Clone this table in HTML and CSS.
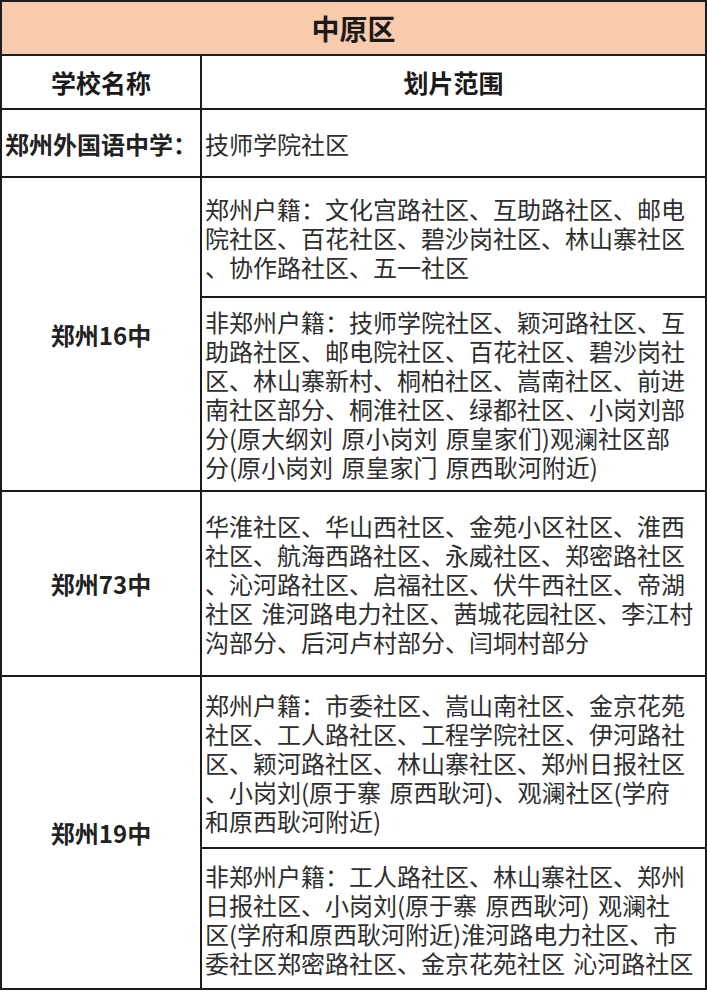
FILE: index.html
```html
<!DOCTYPE html>
<html lang="zh-CN">
<head>
<meta charset="utf-8">
<title>中原区</title>
<link rel="stylesheet" href="styles.css">
</head>
<body>
<div class="grid">
  <div class="cell title">中原区</div>
  <div class="cell head">学校名称</div>
  <div class="cell head">划片范围</div>

  <div class="cell school">郑州外国语中学：</div>
  <div class="cell area">技师学院社区</div>

  <div class="cell school r16">郑州16中</div>
  <div class="cell area">郑州户籍：文化宫路社区、互助路社区、邮电<br>院社区、百花社区、碧沙岗社区、林山寨社区<br>、协作路社区、五一社区</div>
  <div class="cell area">非郑州户籍：技师学院社区、颖河路社区、互<br>助路社区、邮电院社区、百花社区、碧沙岗社<br>区、林山寨新村、桐柏社区、嵩南社区、前进<br>南社区部分、桐淮社区、绿都社区、小岗刘部<br>分(原大纲刘 原小岗刘 原皇家们)观澜社区部<br>分(原小岗刘 原皇家门 原西耿河附近)</div>

  <div class="cell school">郑州73中</div>
  <div class="cell area">华淮社区、华山西社区、金苑小区社区、淮西<br>社区、航海西路社区、永威社区、郑密路社区<br>、沁河路社区、启福社区、伏牛西社区、帝湖<br>社区 淮河路电力社区、茜城花园社区、李江村<br>沟部分、后河卢村部分、闫垌村部分</div>

  <div class="cell school r19">郑州19中</div>
  <div class="cell area">郑州户籍：市委社区、嵩山南社区、金京花苑<br>社区、工人路社区、工程学院社区、伊河路社<br>区、颖河路社区、林山寨社区、郑州日报社区<br>、小岗刘(原于寨 原西耿河)、观澜社区(学府<br>和原西耿河附近)</div>
  <div class="cell area">非郑州户籍：工人路社区、林山寨社区、郑州<br>日报社区、小岗刘(原于寨 原西耿河) 观澜社<br>区(学府和原西耿河附近)淮河路电力社区、市<br>委社区郑密路社区、金京花苑社区 沁河路社区</div>
</div>
</body>
</html>
```

FILE: styles.css
```css
html, body {
  margin: 0;
  padding: 0;
  background: #ffffff;
}

body {
  font-family: "Noto Sans CJK SC", "Noto Sans", sans-serif;
  color: #2a2a2a;
  width: 707px;
  height: 992px;
  overflow: hidden;
}

.grid {
  display: grid;
  grid-template-columns: 200px 505px;
  grid-template-rows: 54px 54px 68px 120px 194px 185px 172px 141px;
  border-top: 2px solid #1c1c1c;
  border-left: 2px solid #1c1c1c;
  width: 705px;
}

.cell {
  border-right: 2px solid #1c1c1c;
  border-bottom: 2px solid #1c1c1c;
  display: flex;
  align-items: center;
  min-width: 0;
}

.title {
  grid-column: 1 / span 2;
  background: #f8cbad;
  justify-content: center;
  font-size: 28px;
  font-weight: 700;
  color: #1a1a1a;
}

.head {
  justify-content: center;
  font-size: 25px;
  font-weight: 700;
  color: #1a1a1a;
}

.school {
  justify-content: center;
  font-size: 24px;
  font-weight: 700;
  color: #222;
  white-space: nowrap;
}

.r16, .r19 {
  grid-row: span 2;
}

.area {
  font-size: 24px;
  line-height: 29px;
  padding-left: 3px;
  white-space: nowrap;
  word-spacing: 3px;
  color: #2e2e2e;
}
```
